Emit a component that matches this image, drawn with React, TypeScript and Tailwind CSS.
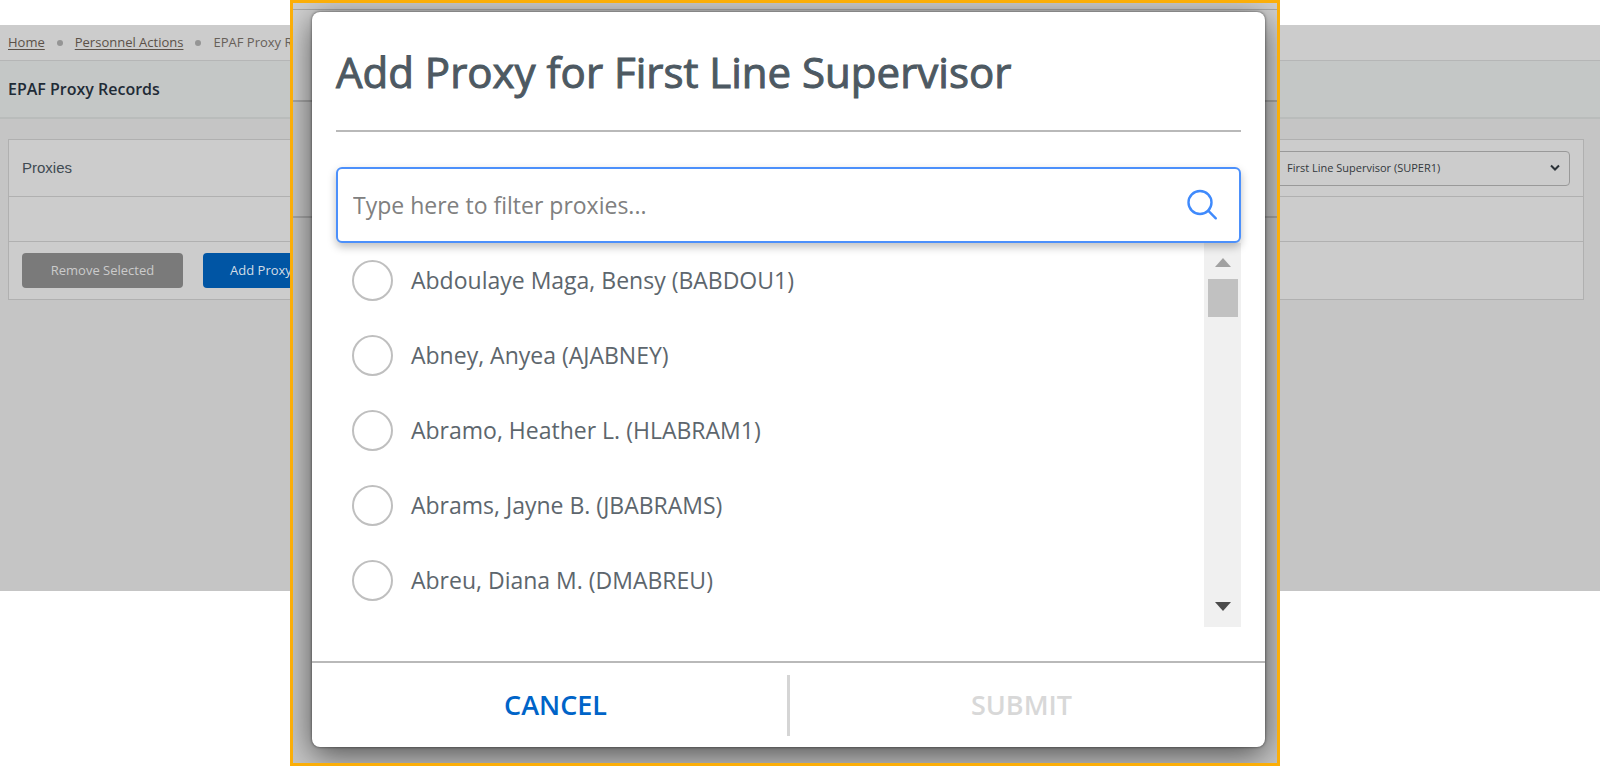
import { useState } from "react";

const proxies = [
  { id: "BABDOU1", name: "Abdoulaye Maga, Bensy" },
  { id: "AJABNEY", name: "Abney, Anyea" },
  { id: "HLABRAM1", name: "Abramo, Heather L." },
  { id: "JBABRAMS", name: "Abrams, Jayne B." },
  { id: "DMABREU", name: "Abreu, Diana M." },
];

function Breadcrumbs() {
  return (
    <nav aria-label="Breadcrumb" className="flex h-9 items-center gap-3 border-b border-[#b5b6b6] bg-[#cccccc] px-2 text-[13px] whitespace-nowrap text-[#5b5148]">
      <a href="#home" className="underline underline-offset-2">Home</a>
      <span className="size-[6px] rounded-full bg-[#959595]" />
      <a href="#personnel" className="underline underline-offset-2">Personnel Actions</a>
      <span className="size-[6px] rounded-full bg-[#959595]" />
      <span className="text-[#666059]">EPAF Proxy Records</span>
    </nav>
  );
}

function ProxyPage() {
  return (
    <main className="mt-[25px] h-[566px] bg-[#c5c5c5]">
      <Breadcrumbs />
      <header className="flex h-[58px] items-center border-b-2 border-[#b9bcbb] bg-[#c4c7c6] px-2">
        <h1 className="text-base font-semibold text-[#1f2b36]">EPAF Proxy Records</h1>
      </header>
      <section className="mt-5 mr-4 ml-2 border border-[#b0b0b0] bg-[#cccccc]">
        <div className="flex h-14 items-center justify-between px-[13px]">
          <h2 className="font-['Liberation_Sans',sans-serif] text-[15px] text-[#3f4a52]">Proxies</h2>
          <div className="relative">
            <select
              aria-label="Supervisor level"
              className="block h-[35px] w-[295px] appearance-none rounded border border-[#999999] bg-transparent pr-8 pl-[11px] text-[11px] text-[#33383c]"
            >
              <option>First Line Supervisor (SUPER1)</option>
            </select>
            <svg className="pointer-events-none absolute top-3 right-[10px] size-[10px]" viewBox="0 0 10 10" fill="none" stroke="#2b3238" strokeWidth="2">
              <path d="M1 2.5 5 6.5 9 2.5" />
            </svg>
          </div>
        </div>
        <div className="h-[45px] border-t border-[#b0b0b0]" />
        <div className="flex h-[58px] items-center gap-5 border-t border-[#b0b0b0] px-[13px] text-[13px] font-medium">
          <button type="button" className="h-[35px] w-[161px] rounded bg-[#7a7a7a] text-[#cbcbcb]">Remove Selected</button>
          <button type="button" className="h-[35px] w-[116px] rounded bg-[#0055a4] text-[#d3dde6]">Add Proxy</button>
        </div>
      </section>
    </main>
  );
}

function ScrollBar() {
  return (
    <div className="flex w-[37px] flex-col items-center bg-[#f0f0f0] pt-[15px] pb-4">
      <button type="button" aria-label="Scroll up">
        <svg className="block h-[9px] w-4" viewBox="0 0 16 9" fill="#a1a1a1"><path d="M0 9 8 0 16 9Z" /></svg>
      </button>
      <div className="mt-3 h-[38px] w-[30px] bg-[#c1c1c1]" />
      <button type="button" aria-label="Scroll down" className="mt-auto">
        <svg className="block h-[9px] w-4" viewBox="0 0 16 9" fill="#4b4b4b"><path d="M0 0H16L8 9Z" /></svg>
      </button>
    </div>
  );
}

function AddProxyDialog() {
  const [selected, setSelected] = useState("");
  return (
    <div role="dialog" aria-labelledby="dialog-title" className="relative flex h-full flex-col rounded-[8px] bg-white shadow-[0_8px_32px_rgba(0,0,0,0.6),0_0_3px_rgba(0,0,0,0.6)]">
      <div className="flex flex-1 flex-col px-6">
        <h2 id="dialog-title" className="h-[120px] border-b-2 border-[#b9b9b9] pt-7 text-[42px] leading-[64px] font-medium whitespace-nowrap text-[#4d5962] [-webkit-text-stroke:1px_#4d5962]">
          Add Proxy for First Line Supervisor
        </h2>
        <div className="relative z-10 mt-[35px] flex h-[76px] items-center rounded-[6px] border-2 border-[#4c90fb] bg-white pr-[21px] pl-[15px] shadow-[0_4px_8px_rgba(0,0,0,0.25)]">
          <input
            type="text"
            aria-label="Filter proxies"
            placeholder="Type here to filter proxies..."
            className="min-w-0 flex-1 bg-transparent text-[23px] text-[#48545d] outline-none placeholder:text-[#808080]"
          />
          <svg className="size-8" viewBox="0 0 32 32" fill="none" stroke="#3f8afc" strokeWidth="2.4" strokeLinecap="round">
            <circle cx="14" cy="13.5" r="11.5" />
            <path d="M22.2 21.7 29.8 29.3" />
          </svg>
        </div>
        <div className="flex h-[384px]">
          <ul className="flex-1">
            {proxies.map((p) => (
              <li key={p.id} className="h-[75px]">
                <label className="flex h-full items-center gap-[18px] pl-4 text-[23px] text-[#5d666d]">
                  <input
                    type="radio"
                    name="proxy"
                    checked={selected === p.id}
                    onChange={() => setSelected(p.id)}
                    className="size-[41px] appearance-none rounded-full border-2 border-[#bfbfbf] bg-white checked:border-[12px] checked:border-[#0061c9]"
                  />
                  <span>{p.name} ({p.id})</span>
                </label>
              </li>
            ))}
          </ul>
          <ScrollBar />
        </div>
      </div>
      <footer className="flex h-[86px] items-center border-t-2 border-[#b9b9b9] text-[27px] font-semibold">
        <button type="button" className="h-full flex-1 pl-3 text-[#0064c8]">CANCEL</button>
        <span className="h-[61px] w-[3px] bg-[#d5d5d5]" />
        <button type="button" disabled className="h-full flex-1 pr-3 text-[#d8d8d8]">SUBMIT</button>
      </footer>
    </div>
  );
}

export default function App() {
  return (
    <div className="relative h-screen min-h-[766px] overflow-hidden bg-white font-['Open_Sans',sans-serif]">
      <ProxyPage />
      <div className="absolute inset-y-0 right-[320px] left-[290px] overflow-hidden border-[3px] border-[#fbae08] bg-[#c6c6c6]">
        <div className="absolute inset-0 flex flex-col">
          <div className="h-[7px] border-b border-[#a8a8a8] bg-[#cfcfcf]" />
          <div className="h-[92px] border-b-2 border-[#a8a8a8] bg-[#d0d0d0]" />
          <div className="h-[116px] border-b-2 border-[#a8a8a8] bg-[#c8c8c8]" />
        </div>
        <div className="h-full pt-[9px] pr-3 pb-4 pl-[19px]">
          <AddProxyDialog />
        </div>
      </div>
    </div>
  );
}
